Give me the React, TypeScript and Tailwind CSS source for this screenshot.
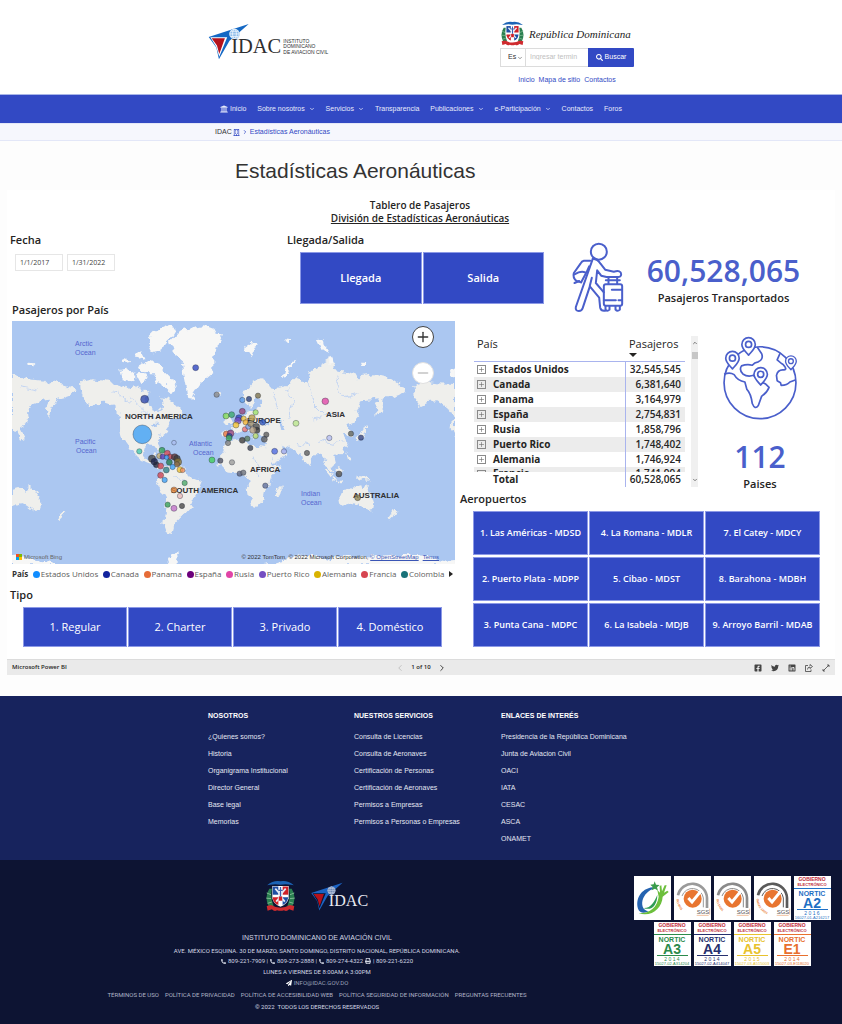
import { useState } from 'react';
import type { ReactNode } from 'react';
import { ChevronDown, ChevronLeft, ChevronRight, ChevronUp, Minus, Plus } from 'lucide-react';
import {
  FaFacebookSquare,
  FaLinkedin,
  FaPaperPlane,
  FaPhoneAlt,
  FaPrint,
  FaRegBuilding,
  FaSearch,
  FaTwitter,
  FaUniversity,
} from 'react-icons/fa';

const NAV = [
  { label: 'Sobre nosotros', menu: true },
  { label: 'Servicios', menu: true },
  { label: 'Transparencia', menu: false },
  { label: 'Publicaciones', menu: true },
  { label: 'e-Participación', menu: true },
  { label: 'Contactos', menu: false },
  { label: 'Foros', menu: false },
];

const COUNTRIES = [
  ['Estados Unidos', '32,545,545'],
  ['Canada', '6,381,640'],
  ['Panama', '3,164,979'],
  ['España', '2,754,831'],
  ['Rusia', '1,858,796'],
  ['Puerto Rico', '1,748,402'],
  ['Alemania', '1,746,924'],
];

const LEGEND = [
  ['Estados Unidos', '#118dff'],
  ['Canada', '#12239e'],
  ['Panama', '#e66c37'],
  ['España', '#6b007b'],
  ['Rusia', '#e044a7'],
  ['Puerto Rico', '#744ec2'],
  ['Alemania', '#d9b300'],
  ['Francia', '#d64550'],
  ['Colombia', '#197278'],
];

const AIRPORTS = [
  '1. Las Américas - MDSD',
  '4. La Romana - MDLR',
  '7. El Catey - MDCY',
  '2. Puerto Plata - MDPP',
  '5. Cibao - MDST',
  '8. Barahona - MDBH',
  '3. Punta Cana - MDPC',
  '6. La Isabela - MDJB',
  '9. Arroyo Barril - MDAB',
];

const TYPES = ['1. Regular', '2. Charter', '3. Privado', '4. Doméstico'];

const FOOTER = [
  {
    title: 'NOSOTROS',
    links: ['¿Quienes somos?', 'Historia', 'Organigrama Institucional', 'Director General', 'Base legal', 'Memorias'],
  },
  {
    title: 'NUESTROS SERVICIOS',
    links: [
      'Consulta de Licencias',
      'Consulta de Aeronaves',
      'Certificación de Personas',
      'Certificación de Aeronaves',
      'Permisos a Empresas',
      'Permisos a Personas o Empresas',
    ],
  },
  {
    title: 'ENLACES DE INTERÉS',
    links: [
      'Presidencia de la República Dominicana',
      'Junta de Aviacion Civil',
      'OACI',
      'IATA',
      'CESAC',
      'ASCA',
      'ONAMET',
    ],
  },
];

const POLICIES = [
  'TÉRMINOS DE USO',
  'POLÍTICA DE PRIVACIDAD',
  'POLÍTICA DE ACCESIBILIDAD WEB',
  'POLÍTICA SEGURIDAD DE INFORMACIÓN',
  'PREGUNTAS FRECUENTES',
];

// x, y, radius, fill
const BUBBLES: [number, number, number, string][] = [
  [427, 373, 28, '#3a9df5'],
  [434, 268, 12, '#2b44a8'],
  [587, 173, 9, '#2b44c0'],
  [650, 254, 8, '#8a8a8a'],
  [418, 424, 8, '#3fc7b0'],
  [522, 398, 7, '#a9bdf0'],
  [456, 446, 11, '#444444'],
  [463, 455, 10, '#1b2350'],
  [469, 464, 9, '#20243a'],
  [478, 438, 8, '#c8b070'],
  [486, 421, 9, '#2f9c55'],
  [488, 440, 8, '#5b3ab5'],
  [502, 430, 9, '#d64550'],
  [510, 440, 8, '#c0404a'],
  [500, 442, 7, '#3a9df5'],
  [524, 441, 10, '#5a3030'],
  [531, 446, 10, '#3b3b3b'],
  [508, 457, 9, '#207a4a'],
  [534, 456, 11, '#8a7330'],
  [531, 463, 8, '#8a6a4a'],
  [482, 468, 9, '#d64550'],
  [518, 471, 8, '#3a9df5'],
  [499, 480, 9, '#2a7f86'],
  [540, 479, 9, '#f0c030'],
  [548, 481, 7, '#f09060'],
  [482, 496, 9, '#d64550'],
  [494, 510, 8, '#3a9df5'],
  [554, 519, 8, '#49a868'],
  [522, 540, 9, '#e8883a'],
  [540, 558, 8, '#e8b8b8'],
  [503, 584, 8, '#2f9c55'],
  [522, 595, 9, '#c070c8'],
  [546, 588, 8, '#444444'],
  [636, 450, 9, '#3fce5a'],
  [661, 452, 8, '#4b4f63'],
  [696, 457, 8, '#9a9a9a'],
  [678, 318, 9, '#7bd651'],
  [695, 314, 9, '#3aa86a'],
  [727, 270, 8, '#5b9be8'],
  [747, 267, 8, '#243b7a'],
  [774, 257, 8, '#7a704a'],
  [727, 304, 9, '#94407a'],
  [767, 307, 8, '#9be069'],
  [717, 324, 10, '#2b44c0'],
  [714, 332, 10, '#744ec2'],
  [731, 326, 8, '#e8c040'],
  [708, 345, 9, '#f0c030'],
  [737, 337, 8, '#f0b030'],
  [735, 358, 8, '#ee7070'],
  [679, 372, 9, '#e8703a'],
  [692, 370, 10, '#94407a'],
  [688, 379, 9, '#2b44a8'],
  [687, 384, 9, '#3fae5a'],
  [684, 399, 8, '#7a7a7a'],
  [756, 324, 10, '#b79c4a'],
  [745, 350, 8, '#7a9ae0'],
  [752, 341, 9, '#9a8a6a'],
  [769, 350, 10, '#4a4a4a'],
  [771, 361, 9, '#3a3a3a'],
  [759, 360, 10, '#b09a80'],
  [788, 337, 9, '#2b54c0'],
  [767, 378, 8, '#b9dc6a'],
  [727, 391, 9, '#3a3a3a'],
  [742, 386, 8, '#5a7a5a'],
  [799, 374, 8, '#5a5a5a'],
  [793, 388, 9, '#5a5a5a'],
  [751, 414, 8, '#3a3f50'],
  [824, 424, 9, '#4a66e0'],
  [852, 424, 8, '#9aa6ee'],
  [719, 491, 8, '#5a607a'],
  [730, 488, 8, '#6a707a'],
  [796, 527, 8, '#5a6a9a'],
  [976, 274, 10, '#e044a7'],
  [888, 340, 9, '#b9e58a'],
  [988, 384, 8, '#b4bdf2'],
  [921, 429, 8, '#5a5a5a'],
  [1053, 371, 8, '#5a5f5a'],
  [1083, 383, 8, '#2f3f80'],
  [1017, 492, 9, '#4a4a4a'],
  [1073, 563, 9, '#8f8250'],
];

const LAND = [
  // eastern Siberia, western edge of the map
  'M36,190L60,202L78,195L88,208L130,212L142,226L165,214L198,224L228,240L212,254L190,262L172,266L158,292L140,320L138,300L150,272L120,275L95,285L84,302L86,325L75,345L60,355L74,384L62,390L48,362L36,372Z',
  // North and Central America
  'M242,240L240,217L275,208L330,215L362,225L382,235L402,228L432,240L446,252L438,275L456,300L478,310L490,290L484,262L508,268L525,285L548,308L530,326L512,330L497,350L505,362L482,382L470,402L481,424L474,422L463,408L440,406L430,416L430,436L442,450L454,446L462,430L474,431L464,454L480,460L488,480L506,484L500,492L480,478L460,464L438,456L414,441L400,425L386,405L372,396L364,375L358,345L363,320L352,300L335,285L315,278L295,280L268,292L250,265Z',
  // South America
  'M486,482L508,462L540,470L560,486L566,500L606,516L600,532L586,560L576,588L560,606L545,620L530,635L522,650L516,672L500,668L490,640L495,600L498,565L482,535L470,512Z',
  // Africa
  'M682,390L720,385L736,390L746,406L776,405L800,408L812,440L822,464L842,460L835,476L812,502L808,530L795,546L790,570L772,590L756,588L745,552L742,505L730,490L700,492L680,490L655,466Z',
  // Europe and Asia
  'M672,365L700,362L694,346L710,335L725,322L738,314L744,300L764,300L786,290L780,270L770,262L762,282L750,290L736,280L728,264L738,240L760,216L785,205L806,216L810,232L828,234L852,230L875,225L890,198L902,215L920,215L930,185L960,165L985,150L1010,160L1000,180L1040,185L1080,202L1130,195L1172,205L1200,225L1222,240L1200,255L1180,262L1152,262L1146,300L1130,320L1128,290L1140,265L1100,270L1080,275L1070,300L1078,325L1060,345L1045,350L1060,380L1050,385L1035,365L1024,362L1036,385L1040,400L1030,425L1000,440L1006,465L992,468L1000,492L985,480L975,450L960,430L945,430L925,466L912,450L905,430L880,420L862,412L846,404L862,434L850,450L824,460L808,430L800,405L792,390L804,376L772,376L762,384L740,360L726,362L700,376L680,386Z',
  'M676,342L690,338L694,318L684,305L678,322Z',
  'M640,250L655,244L664,252L652,260Z',
  'M824,562L826,542L842,526L842,546L834,562Z',
  // Indonesia, Philippines, Japan, New Guinea
  'M968,470L985,484L998,502L990,504L974,486Z',
  'M1006,480L1022,466L1028,480L1020,498L1008,494Z',
  'M1038,426L1046,440L1052,456L1044,452Z',
  'M1000,506L1024,510L1020,514L1000,511Z',
  'M1068,494L1088,498L1110,510L1096,512L1076,504Z',
  'M1070,382L1084,374L1092,350L1098,342L1098,362L1088,384L1072,390Z',
  // Australia and New Zealand
  'M1018,556L1046,540L1064,530L1084,526L1088,540L1098,522L1108,545L1124,570L1120,600L1102,604L1090,590L1065,580L1030,590L1020,580Z',
  'M36,540L60,533L76,543L88,526L98,536L112,556L130,578L122,600L104,606L84,590L60,580L36,588Z',
  'M170,630L182,615L190,600L196,606L186,622L174,634Z',
  'M1164,632L1176,615L1184,600L1190,606L1180,622L1168,634Z',
  // Alaska again on the eastern edge
  'M1242,240L1240,225L1275,215L1310,220L1365,222L1365,386L1355,350L1360,322L1342,292L1312,274L1285,276L1260,288L1244,265Z',
  // Cuba and Hispaniola
  'M468,424L490,428L498,434L480,430Z',
  'M500,436L518,438L512,444L500,442Z',
];

// Arctic islands, Greenland and Antarctica are drawn as ice
const ICE = [
  'M510,95L540,62L580,52L612,46L640,56L650,74L666,76L650,110L640,150L640,190L620,206L600,225L586,245L578,272L565,270L562,240L554,200L548,150L520,125Z',
  'M440,90L470,60L500,46L530,56L516,80L500,100L484,124L460,130L450,110Z',
  'M358,180L380,176L400,190L410,205L390,216L366,210Z',
  'M366,148L384,140L390,156L372,160Z',
  'M400,132L424,124L436,146L416,152Z',
  'M420,168L450,150L476,160L500,190L520,210L530,240L512,246L490,226L468,214L456,190L430,190Z',
  'M410,196L430,194L440,212L424,222Z',
  'M732,110L748,98L772,102L762,120L752,142L744,126Z',
  'M856,88L874,90L878,96L860,96Z',
  'M848,204L856,178L880,152L892,150L872,172L860,200Z',
  'M954,90L968,88L972,106L984,126L968,120Z',
  'M984,144L1000,140L1004,160L990,164Z',
  'M1080,158L1102,158L1100,168L1084,168Z',
  'M84,158L106,160L102,168L86,168Z',
  'M1350,180L1365,170L1365,198L1352,200Z',
  'M36,738L60,736L96,748L150,756L180,766L36,766Z',
  'M496,766L510,744L532,720L536,744L530,766Z',
  'M790,766L850,756L900,734L950,736L980,752L1020,738L1100,746L1200,734L1290,742L1340,752L1365,750L1365,766Z',
  'M1020,756L1060,742L1120,738L1180,740L1150,766L1030,766Z',
];

const LAKES = [
  'M780,346L792,338L806,350L790,354Z',
  'M838,336L848,334L846,350L854,366L844,366L840,350Z',
  'M452,340L466,338L480,350L468,350Z',
];

function PowerBiMap() {
  return (
    <svg viewBox="0 0 443 243" className="block w-full bg-[#abc7f1]" role="img" aria-label="Mapa">
      <defs>
        <filter id="coast" x="0" y="0" width="1" height="1" colorInterpolationFilters="sRGB">
          <feTurbulence type="fractalNoise" baseFrequency="0.12" numOctaves="3" seed="7" result="noise" />
          <feDisplacementMap in="SourceGraphic" in2="noise" scale="9" xChannelSelector="R" yChannelSelector="G" />
        </filter>
      </defs>
      <g filter="url(#coast)">
        <g transform="scale(0.3333) translate(-36 -33)">
          <path d={LAND.join('')} fill="#efefec" />
          <path d={ICE.join('')} fill="#f7f7f6" />
          <path d={LAKES.join('')} fill="#abc7f1" />
          <g fill="none" stroke="#c3d5f2" strokeWidth="3">
            <path d="M860,240L880,280L866,320M925,220L940,280L980,320M1010,200L1030,260L1080,250M940,330L1000,310M820,250L830,300" />
            <path d="M390,260L420,290L460,330M340,240L390,280M520,500L560,510M60,230L110,240M760,440L780,500" />
            <path d="M960,390L1000,400L1030,395M890,400L930,410" />
          </g>
        </g>
      </g>
      <g fill="#5566cf" className="font-['Liberation_Sans',sans-serif] text-[7px]">
        <text x="63" y="25">Arctic</text>
        <text x="63" y="34">Ocean</text>
        <text x="63" y="123">Pacific</text>
        <text x="64" y="132">Ocean</text>
        <text x="177" y="125">Atlantic</text>
        <text x="181" y="134">Ocean</text>
        <text x="289" y="175">Indian</text>
        <text x="289" y="184">Ocean</text>
      </g>
      <g fill="#2f3033" className="font-['Liberation_Sans',sans-serif] text-[8px] font-bold">
        <text x="113" y="98">NORTH AMERICA</text>
        <text x="159" y="172">SOUTH AMERICA</text>
        <text x="235" y="102">EUROPE</text>
        <text x="314" y="96">ASIA</text>
        <text x="238" y="151">AFRICA</text>
        <text x="341" y="177">AUSTRALIA</text>
      </g>
      <g transform="scale(0.3333) translate(-36 -33)">
        {BUBBLES.map(([x, y, r, fill], i) => (
          <circle key={i} cx={x} cy={y} r={r} fill={fill} fillOpacity="0.78" stroke="#1f2433" strokeOpacity="0.5" strokeWidth="2" />
        ))}
      </g>
    </svg>
  );
}

function IdacLogo({ light = false }: { light?: boolean }) {
  const ink = light ? '#e8eaf2' : '#2e2e30';
  return (
    <svg
      viewBox={light ? '54 66 224 112' : '54 66 364 112'}
      className={light ? 'h-[31px] w-[58px]' : 'h-[37px] w-[121px]'}
      role="img"
      aria-label="IDAC"
    >
      <path d="M55,108L176,69L152,90L118,120L86,176L78,140Z" fill={light ? '#1c64c4' : '#1468c4'} />
      <path d="M60,109L111,109L87,168L78,138Z" fill={light ? '#0d1433' : '#ffffff'} />
      <path d="M64,112L104,112L87,160L80,134Z" fill="#b5121b" />
      <circle cx="133" cy="99" r="16" fill={light ? '#6d86b0' : '#8fbdea'} />
      <g fill="none" stroke={light ? '#c9d3e8' : '#ffffff'} strokeWidth="2">
        <circle cx="133" cy="99" r="14" />
        <ellipse cx="133" cy="99" rx="6" ry="14" />
        <path d="M119,99h28M122,91h22M122,107h22" />
      </g>
      <text x="123" y="158" fontSize="62" fill={ink} className="font-['Liberation_Serif',serif]">
        IDAC
      </text>
      {!light && (
        <g fill={ink} fontSize="15" className="font-['Liberation_Sans',sans-serif]">
          <text x="281" y="126">INSTITUTO</text>
          <text x="281" y="143">DOMINICANO</text>
          <text x="281" y="161">DE AVIACION CIVIL</text>
        </g>
      )}
    </svg>
  );
}

function CoatOfArms({ className }: { className: string }) {
  return (
    <svg viewBox="0 0 72 74" className={className} role="img" aria-label="Escudo">
      <path d="M5,12Q20,0 36,3Q52,0 67,12L60,11Q48,8 36,11Q24,8 12,11Z" fill="#1b63b5" />
      <path d="M10,20Q-2,38 8,60L20,60Q12,42 16,20Z" fill="#2a7f50" />
      <path d="M62,20Q74,38 64,60L52,60Q60,42 56,20Z" fill="#2a7f50" />
      <path d="M4,30l10,4M3,42l11,1M6,54l10,-3M68,30l-10,4M69,42l-11,1M66,54l-10,-3" stroke="#8cc29c" strokeWidth="2" />
      <path d="M17,14H55V42Q52,56 36,62Q20,56 17,42Z" fill="#ffffff" />
      <path d="M18,15H31V34H18Z" fill="#1f4fa3" />
      <path d="M41,15H54V34H41Z" fill="#cf2027" />
      <path d="M18,40H31V58Q20,54 18,42Z" fill="#cf2027" />
      <path d="M41,40H54Q52,54 41,58Z" fill="#1f4fa3" />
      <path d="M24,20L36,34L48,20M26,50L36,38L46,50" stroke="#e7ecf5" strokeWidth="4" fill="none" />
      <path d="M32,38h8v10h-8z" fill="#cf2027" />
      <path d="M36,16v22M31,24h10" stroke="#3d5fae" strokeWidth="3" />
      <path d="M4,60L14,58Q36,70 58,58L68,60L66,71L56,68Q50,74 44,70Q36,73 28,70Q22,74 16,68L6,71Z" fill="#cf2b2f" />
    </svg>
  );
}

function TravelerIcon() {
  return (
    <svg viewBox="62 62 158 216" className="h-[72px] w-[53px] shrink-0" fill="none" stroke="#4a5fcb" strokeWidth="6" strokeLinecap="round" strokeLinejoin="round">
      <circle cx="145" cy="94" r="24" />
      <path d="M127,115L76,260Q74,272 85,272Q94,272 97,262L118,198L146,232L149,262Q152,273 164,271" />
      <path d="M127,115Q142,116 150,130L164,148L190,154Q212,148 212,162Q212,171 200,170H168L152,166L140,150L136,188L160,216" />
      <path d="M118,196L124,172" />
      <path d="M119,121H100Q94,122 90,130L70,158Q66,172 78,182L92,186" />
      <path d="M72,162L84,156Q96,152 104,156M92,186L108,156L116,138M72,188L86,182" />
      <path d="M174,171V190M200,171V190M166,180H208" />
      <rect x="160" y="192" width="55" height="64" rx="6" />
      <path d="M184,208H214M160,240H196M204,240H214" />
      <path d="M165,257V268Q170,275 177,268V257M195,257V268Q201,275 208,268V257" />
    </svg>
  );
}

function Pin({ x, y, s = 1 }: { x: number; y: number; s?: number }) {
  return (
    <g transform={`translate(${x} ${y}) scale(${s})`}>
      <path d="M-20,0a20,20 0 1 1 40,0C20,13 6,24 0,32C-6,24 -20,13 -20,0Z" fill="#ffffff" />
      <circle r="9" />
    </g>
  );
}

function GlobeIcon() {
  return (
    <svg viewBox="516 345 226 250" className="h-[84px] w-[76px]" fill="none" stroke="#4a5fcb" strokeWidth="5" strokeLinecap="round" strokeLinejoin="round">
      <circle cx="629" cy="484" r="107" />
      <path d="M524,458Q540,452 552,460Q562,478 584,482L590,504Q602,516 606,546Q614,566 624,552L634,524Q650,514 656,498L646,488L630,480L618,470L610,462Q592,468 578,458Q566,446 574,434Q590,428 606,432Q612,424 624,422Q640,414 634,398L622,380" />
      <path d="M688,398L680,416Q694,428 698,430Q712,444 700,446Q682,444 678,462L680,478L690,484L692,492Q710,492 718,482L734,476" />
      <Pin x={595} y={370} />
      <Pin x={547} y={411} />
      <Pin x={631} y={459} />
      <Pin x={721} y={420} s={0.8} />
    </svg>
  );
}

function Slicer({ children, className }: { children: ReactNode; className: string }) {
  return (
    <button type="button" className={`border border-[#8c99e6] bg-[#3249c4] text-center text-white hover:bg-[#2a3eab] ${className}`}>
      {children}
    </button>
  );
}

function SectionTitle({ children }: { children: ReactNode }) {
  return <h2 className="text-[11px] leading-[14px] font-semibold text-[#252423]">{children}</h2>;
}

function SiteHeader() {
  return (
    <header className="bg-white">
      <div className="mx-auto flex w-full max-w-[426px] items-start justify-between pt-[21px] pb-[10px]">
        <a href="#inicio" className="mt-[2px]">
          <IdacLogo />
        </a>
        <div className="w-[134px]">
          <div className="flex items-center gap-1">
            <CoatOfArms className="h-[25px] w-[25px] shrink-0" />
            <span className="font-['Liberation_Serif',serif] text-[11px] leading-[20px] whitespace-nowrap text-[#222] italic">
              República Dominicana
            </span>
          </div>
          <form className="mt-[2px] flex h-[19px]" onSubmit={(e) => e.preventDefault()}>
            <div className="relative flex w-[26px] shrink-0 items-center border border-[#dcdcdc]">
              <select aria-label="Idioma" className="h-full w-full appearance-none pl-[7px] text-[7px] text-[#333]">
                <option>Es</option>
                <option>En</option>
              </select>
              <ChevronDown className="pointer-events-none absolute right-[2px] h-[6px] w-[6px] text-[#333]" />
            </div>
            <input
              type="text"
              aria-label="Buscar término"
              placeholder="Ingresar termin"
              className="w-full min-w-0 border-y border-[#dcdcdc] px-1 text-[7px] placeholder:text-[#c0c0c0]"
            />
            <button type="submit" className="flex w-[46px] shrink-0 items-center justify-center gap-[2px] rounded-r-[1px] bg-[#3249c4] text-[7px] text-white">
              <FaSearch />
              Buscar
            </button>
          </form>
          <div className="mt-2 flex justify-center gap-1 text-[7px] leading-[9px] text-[#3249c4]">
            <a href="#inicio">Inicio</a>
            <a href="#mapa">Mapa de sitio</a>
            <a href="#contactos">Contactos</a>
          </div>
        </div>
      </div>
      <nav className="border-t border-[#a9b6e8] bg-[#3249c4]">
        <div className="mx-auto flex h-7 w-full max-w-[402px] items-center justify-between text-[7px] text-[#e8ebfb]">
          <a href="#inicio" className="flex items-center gap-[2px]">
            <FaUniversity className="text-[8px]" />
            Inicio
          </a>
          {NAV.map((item) => (
            <a key={item.label} href="#menu" className="flex items-center gap-1">
              {item.label}
              {item.menu && <ChevronDown className="h-[6px] w-[6px]" strokeWidth={3} />}
            </a>
          ))}
        </div>
      </nav>
      <div className="border-y border-[#e3e7f8] bg-[#f6f7fd]">
        <div className="mx-auto flex h-4 w-full max-w-[412px] items-center gap-px text-[7px] text-[#3249c4]">
          <span className="text-[#333]">IDAC</span>
          <FaRegBuilding />
          <ChevronRight className="mx-px h-[6px] w-[6px]" strokeWidth={3} />
          <a href="#estadisticas">Estadísticas Aeronáuticas</a>
        </div>
      </div>
    </header>
  );
}

function CountryTable() {
  return (
    <div className="flex min-w-0 flex-1 gap-[6px]">
      <table className="w-full border-collapse text-[#252423]">
        <thead>
          <tr className="h-[25px] border-b border-[#a9b4ee] text-left align-top text-[11px] leading-[15px]">
            <th colSpan={2} className="pl-[3px] font-medium">
              País
            </th>
            <th className="pl-1 font-medium">
              Pasajeros
              <span className="mt-[2px] block h-0 w-0 border-x-4 border-t-4 border-x-transparent border-t-[#252423]" />
            </th>
          </tr>
        </thead>
        <tbody>
          {COUNTRIES.map(([name, value]) => (
            <tr key={name} className="h-[15px] even:bg-[#ececec]">
              <td className="w-[19px] pl-[3px]">
                <button type="button" aria-label={`Expandir ${name}`} className="flex h-[9px] w-[9px] items-center justify-center border border-[#8a8a8a]">
                  <Plus className="h-[7px] w-[7px] shrink-0 text-[#666]" />
                </button>
              </td>
              <td className="text-[10px] leading-[15px] font-bold">{name}</td>
              <td className="w-[60px] border-l border-[#a9b4ee] pr-1 text-right text-[10px] leading-[15px] font-semibold">{value}</td>
            </tr>
          ))}
          {/* next row, scrolled half out of view */}
          <tr className="bg-[#ececec]">
            <td className="pl-[3px]">
              <div className="h-[5px] overflow-hidden">
                <div className="mt-[3px] h-[9px] w-[9px] border border-[#8a8a8a]" />
              </div>
            </td>
            <td className="text-[10px] leading-[12px] font-bold">
              <div className="h-[5px] overflow-hidden">Francia</div>
            </td>
            <td className="border-l border-[#a9b4ee] pr-1 text-right text-[10px] leading-[12px] font-semibold">
              <div className="h-[5px] overflow-hidden">1,741,994</div>
            </td>
          </tr>
        </tbody>
        <tfoot>
          <tr className="h-[15px] text-[10px] leading-[15px]">
            <td />
            <td className="font-bold">Total</td>
            <td className="border-l border-[#a9b4ee] pr-1 text-right font-semibold">60,528,065</td>
          </tr>
        </tfoot>
      </table>
      <div className="flex w-[7px] shrink-0 flex-col items-center bg-[#f0f0f0] py-1">
        <ChevronUp className="h-[6px] w-[6px] text-[#555]" strokeWidth={3} />
        <div className="mt-[6px] h-[7px] w-[6px] bg-[#c6c6c6]" />
        <ChevronDown className="mt-auto h-[6px] w-[6px] text-[#555]" strokeWidth={3} />
      </div>
    </div>
  );
}

function Dashboard() {
  const [from, setFrom] = useState('1/1/2017');
  const [to, setTo] = useState('1/31/2022');

  return (
    <section className="mx-[7px] bg-white font-['Open_Sans','Noto_Sans',sans-serif]">
      <div className="pt-[9px] pr-[5px] pb-3 pl-[3px]">
        <div className="text-center text-[10px] leading-[13px] font-semibold text-[#252423]">
          <p>Tablero de Pasajeros</p>
          <p className="underline">División de Estadísticas Aeronáuticas</p>
        </div>

        <div className="mt-2 grid h-[70px] grid-cols-[277fr_258fr_285fr]">
          <div>
            <SectionTitle>Fecha</SectionTitle>
            <div className="mt-[7px] flex gap-1 pl-[5px]">
              <input
                aria-label="Fecha inicial"
                value={from}
                onChange={(e) => setFrom(e.target.value)}
                className="h-[17px] w-12 border border-[#e6e6e6] pl-1 text-[7px] text-[#444]"
              />
              <input
                aria-label="Fecha final"
                value={to}
                onChange={(e) => setTo(e.target.value)}
                className="h-[17px] w-12 border border-[#e6e6e6] pl-1 text-[7px] text-[#444]"
              />
            </div>
          </div>
          <div>
            <SectionTitle>Llegada/Salida</SectionTitle>
            <div className="mt-[5px] grid grid-cols-2 gap-px pr-px pl-[13px]">
              <Slicer className="h-[52px] text-[11px] font-semibold">Llegada</Slicer>
              <Slicer className="h-[52px] text-[11px] font-semibold">Salida</Slicer>
            </div>
          </div>
          <div className="flex items-start pt-2 pr-[7px] pl-[26px]">
            <TravelerIcon />
            <div className="flex-1 pt-[11px] text-center">
              <p className="text-[30px] leading-[38px] font-semibold text-[#4a5fcb]">60,528,065</p>
              <p className="text-[11px] leading-[16px] font-semibold text-[#252423]">Pasajeros Transportados</p>
            </div>
          </div>
        </div>

        <div className="grid grid-cols-[445fr_375fr]">
          <div className="pl-[2px]">
            <SectionTitle>Pasajeros por País</SectionTitle>
            <div className="relative mt-1">
              <PowerBiMap />
              <button
                type="button"
                aria-label="Acercar"
                className="absolute top-[5px] right-[21px] flex h-[22px] w-[22px] items-center justify-center rounded-full border border-[#444] bg-white text-[#333]"
              >
                <Plus className="h-[16px] w-[16px]" strokeWidth={2} />
              </button>
              <button
                type="button"
                aria-label="Alejar"
                className="absolute top-[41px] right-[21px] flex h-[22px] w-[22px] items-center justify-center rounded-full border border-[#e0e0e0] bg-white text-[#c4c4c4]"
              >
                <Minus className="h-[16px] w-[16px]" strokeWidth={2} />
              </button>
              <div className="absolute right-[16px] bottom-[3px] left-1 flex items-center font-['Liberation_Sans',sans-serif] text-[6px] leading-[8px] text-[#333]">
                <svg viewBox="0 0 6 6" className="h-[6px] w-[6px]">
                  <path d="M0,0h3v3h-3z" fill="#f25022" />
                  <path d="M3,0h3v3h-3z" fill="#7fba00" />
                  <path d="M0,3h3v3h-3z" fill="#00a4ef" />
                  <path d="M3,3h3v3h-3z" fill="#ffb900" />
                </svg>
                <span className="ml-[2px] text-[#666]">Microsoft Bing</span>
                <span className="ml-auto">© 2022 TomTom, © 2022 Microsoft Corporation,&nbsp;</span>
                <a href="#osm" className="text-[#3a55b5] underline">© OpenStreetMap</a>
                <a href="#terms" className="ml-1 text-[#3a55b5] underline">Terms</a>
              </div>
            </div>
            <div className="mt-[3px] flex items-center justify-between pr-[2px] text-[8px] leading-[14px] whitespace-nowrap text-[#605e5c]">
              <span className="font-bold text-[#333]">País</span>
              {LEGEND.map(([name, color]) => (
                <span key={name} className="flex items-center gap-px">
                  <span className="h-[7px] w-[7px] rounded-full" style={{ backgroundColor: color }} />
                  {name}
                </span>
              ))}
              <span className="h-0 w-0 border-y-[3px] border-l-4 border-y-transparent border-l-[#252423]" />
            </div>
            <div className="mt-[7px] -ml-[2px]">
              <SectionTitle>Tipo</SectionTitle>
            </div>
            <div className="mt-[5px] grid grid-cols-4 gap-px pr-[13px] pl-[11px]">
              {TYPES.map((type) => (
                <Slicer key={type} className="h-10 text-[11px]">
                  {type}
                </Slicer>
              ))}
            </div>
          </div>

          <div className="flex flex-col pl-[5px]">
            <div className="-mb-1 flex items-start pt-[33px] pl-[14px]">
              <CountryTable />
              <div className="flex w-[132px] shrink-0 flex-col items-center pr-2">
                <GlobeIcon />
                <p className="mt-[18px] text-[30px] leading-[38px] font-semibold text-[#4a5fcb]">112</p>
                <p className="text-[11px] leading-[16px] font-semibold text-[#252423]">Paises</p>
              </div>
            </div>
            <div className="mt-auto">
              <SectionTitle>Aeropuertos</SectionTitle>
            </div>
            <div className="mt-[5px] grid grid-cols-3 gap-x-px gap-y-[2px] pr-[10px] pl-[13px]">
              {AIRPORTS.map((airport) => (
                <Slicer key={airport} className="h-11 text-[9px] font-semibold whitespace-nowrap">
                  {airport}
                </Slicer>
              ))}
            </div>
          </div>
        </div>
      </div>

      <div className="grid h-4 grid-cols-3 items-center border-t border-[#dcdcdc] bg-[#eaeaea] px-[5px] text-[6px] text-[#252423]">
        <a href="#powerbi" className="font-semibold">Microsoft Power BI</a>
        <div className="flex items-center justify-center gap-[6px] font-semibold">
          <button type="button" aria-label="Página anterior" className="text-[#bbb]">
            <ChevronLeft className="h-[10px] w-[10px]" />
          </button>
          1 of 10
          <button type="button" aria-label="Página siguiente">
            <ChevronRight className="h-[10px] w-[10px]" />
          </button>
        </div>
        <div className="flex items-center justify-end gap-[9px] text-[8px] text-[#444]">
          <a href="#facebook" aria-label="Facebook"><FaFacebookSquare /></a>
          <a href="#twitter" aria-label="Twitter"><FaTwitter /></a>
          <a href="#linkedin" aria-label="LinkedIn"><FaLinkedin /></a>
          <button type="button" aria-label="Compartir">
            <svg viewBox="0 0 16 16" className="h-2 w-2" fill="none" stroke="currentColor" strokeWidth="1.6">
              <path d="M6,3H1V15H12V11M5,11Q5,6 10,6V9L15,5L10,1V4" />
            </svg>
          </button>
          <button type="button" aria-label="Pantalla completa">
            <svg viewBox="0 0 16 16" className="h-2 w-2" fill="none" stroke="currentColor" strokeWidth="1.6">
              <path d="M2,14L14,2M10,2H14V6M2,10V14H6" />
            </svg>
          </button>
        </div>
      </div>
    </section>
  );
}

function SgsBadge({ ring, caption }: { ring: string; caption: string }) {
  const arcId = caption.replace(' ', '');
  return (
    <svg viewBox="0 0 111 132" className="h-11 w-[37px] bg-white" role="img" aria-label="SGS">
      <path d="M12,58A44,44 0 0 1 99,66V96" fill="none" stroke={ring} strokeWidth="8" />
      <path d="M24,60A33,33 0 0 1 88,66V94" fill="none" stroke={ring} strokeWidth="3" />
      <circle cx="56" cy="68" r="27" fill="#e87530" />
      <path d="M43,66L54,78L80,46" fill="none" stroke="#ffffff" strokeWidth="9" />
      <path id={arcId} d="M8,68A50,50 0 0 0 60,118" fill="none" />
      <text fontSize="9" fontWeight="700" fill="#e87530" className="font-['Liberation_Sans',sans-serif]">
        <textPath href={`#${arcId}`}>{caption}</textPath>
      </text>
      <text x="68" y="114" fontSize="18" fill="#555" className="font-['Liberation_Sans',sans-serif]">
        SGS
      </text>
      <path d="M68,118H104M107,98V116" stroke="#e8a070" strokeWidth="2" />
    </svg>
  );
}

function NorticBadge({ code, year, serial, color }: { code: string; year: string; serial: string; color: string }) {
  return (
    <div className="flex h-11 w-[37px] flex-col items-center overflow-hidden bg-white font-bold" style={{ color }}>
      <span className="mt-px text-[5px] leading-[5px] text-[#c02a3a]">GOBIERNO</span>
      <span className="text-[4px] leading-[5px] text-[#c02a3a]">ELECTRÓNICO</span>
      <span className="mt-px w-full border-t border-current pt-px text-center text-[7px] leading-[7px]">NORTIC</span>
      <span className="text-[14px] leading-[12px]">{code}</span>
      <span className="w-[31px] border-t border-current text-center text-[5px] leading-[6px] font-normal">{year}</span>
      <span className="text-[4px] leading-[4px] font-normal">{serial}</span>
    </div>
  );
}

function SiteFooter() {
  return (
    <footer className="text-white">
      <div className="bg-[#17235d]">
        <div className="mx-auto grid min-h-[164px] w-full max-w-[426px] grid-cols-[146fr_147fr_133fr] pt-[15px] pb-[13px] text-[7px]">
          {FOOTER.map((column) => (
            <div key={column.title}>
              <h3 className="leading-[9px] font-bold">{column.title}</h3>
              <ul className="mt-2 leading-[17px] whitespace-nowrap text-[#e4e7f2]">
                {column.links.map((link) => (
                  <li key={link}>
                    <a href="#enlace">{link}</a>
                  </li>
                ))}
              </ul>
            </div>
          ))}
        </div>
      </div>
      <div className="flex min-h-[164px] items-start bg-[#0d1433]">
        <div className="flex flex-1 flex-col items-center pt-5 font-['Roboto','Liberation_Sans',sans-serif] text-[6px] leading-[10px] text-[#d3d7e4]">
          <div className="flex items-center gap-[15px]">
            <CoatOfArms className="h-8 w-[31px]" />
            <IdacLogo light />
          </div>
          <p className="mt-[21px] font-['Liberation_Sans',sans-serif] text-[7px]">INSTITUTO DOMINICANO DE AVIACIÓN CIVIL</p>
          <p className="mt-[3px]">AVE. MÉXICO ESQUINA. 30 DE MARZO, SANTO DOMINGO, DISTRITO NACIONAL, REPÚBLICA DOMINICANA.</p>
          <p className="flex items-center gap-[2px]">
            <FaPhoneAlt className="text-[5px]" /> 809-221-7909 | <FaPhoneAlt className="text-[5px]" /> 809-273-2888 |{' '}
            <FaPhoneAlt className="text-[5px]" /> 809-274-4322 <FaPrint /> | 809-221-6220
          </p>
          <p className="mt-px">LUNES A VIERNES DE 8:00AM A 3:00PM</p>
          <a href="#correo" className="mt-px flex items-center gap-[2px] text-[#9aa0b8]">
            <FaPaperPlane className="text-white" />
            INFO@IDAC.GOV.DO
          </a>
          <div className="mt-[2px] flex gap-[6px] whitespace-nowrap text-[#aeb3c6]">
            {POLICIES.map((policy) => (
              <a key={policy} href="#politica">
                {policy}
              </a>
            ))}
          </div>
          <p className="mt-[2px]">© 2022&nbsp; TODOS LOS DERECHOS RESERVADOS</p>
        </div>
        <div className="flex w-[208px] shrink-0 flex-col items-center gap-[2px] pt-4 pr-3">
          <div className="flex gap-[3px]">
            <svg viewBox="0 0 111 132" className="h-11 w-[37px] bg-white" role="img" aria-label="Carta Compromiso">
              <path d="M56,34C20,38 4,70 12,98C16,110 30,114 44,106C26,104 20,84 28,66C34,52 46,42 60,38Z" fill="#2563b0" />
              <path d="M14,112C54,124 84,96 86,62L104,48L100,44L90,50L98,28L92,28L84,46L82,28L77,30L78,50L70,42L74,62C70,92 50,112 14,112Z" fill="#6cbf3c" />
              <path d="M28,96C50,98 62,76 70,56C70,86 54,106 28,96Z" fill="#2f9c55" />
              <path d="M62,16L66,26L77,27L69,34L72,44L63,38L53,43L56,33L49,26L59,25Z" fill="#3a9c4a" />
            </svg>
            <SgsBadge ring="#9a9a9a" caption="ISO 9001" />
            <SgsBadge ring="#8a8a8a" caption="ISO 14001" />
            <SgsBadge ring="#5a5a5a" caption="OHSAS 18001" />
            <NorticBadge code="A2" year="2 0 1 6" serial="16027-01-A216217" color="#1f6fc4" />
          </div>
          <div className="flex gap-[3px]">
            <NorticBadge code="A3" year="2 0 1 4" serial="15027-02-A314204" color="#2b8a4b" />
            <NorticBadge code="A4" year="2 0 1 4" serial="15027-02-A414047" color="#26306e" />
            <NorticBadge code="A5" year="2 0 1 5" serial="15027-03-A515003" color="#e8c22e" />
            <NorticBadge code="E1" year="2 0 1 4" serial="15027-03-E118020" color="#e8702e" />
          </div>
        </div>
      </div>
    </footer>
  );
}

export default function App() {
  return (
    <div className="min-h-screen bg-[#fdfdfd] font-['Liberation_Sans',sans-serif]">
      <SiteHeader />
      <main className="pb-[21px]">
        <div className="mx-auto w-full max-w-[426px] pt-4 pb-[5px]">
          <h1 className="pl-[27px] text-[21px] leading-7 text-[#333]">Estadísticas Aeronáuticas</h1>
        </div>
        <Dashboard />
      </main>
      <SiteFooter />
    </div>
  );
}
